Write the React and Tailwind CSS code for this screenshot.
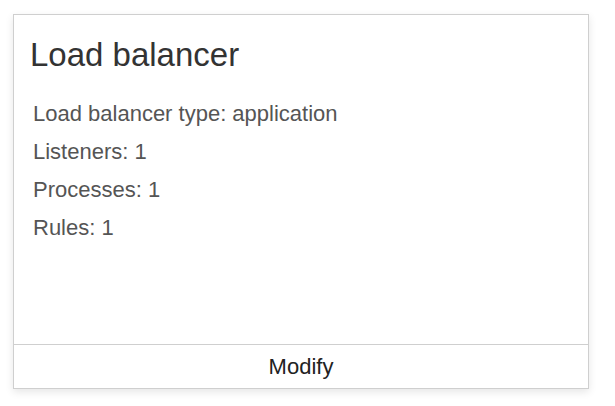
export default function App() {
  const rows = ['Load balancer type: application', 'Listeners: 1', 'Processes: 1', 'Rules: 1'];

  return (
    <div className="min-h-screen bg-white pl-[13px] pt-[14px] font-['Liberation_Sans',Arial,sans-serif]">
      <div className="flex h-[375px] w-[576px] flex-col border border-[#cfcfcf] bg-white shadow-[0_3px_8px_rgba(0,0,0,0.10)]">
        <div className="flex-1 pl-4 pt-[22px]">
          <h2 className="text-[33px] leading-[36px] text-[#333]">Load balancer</h2>
          <ul className="mt-[22px] pl-[3px]">
            {rows.map((row) => (
              <li key={row} className="text-[22px] leading-[38px] text-[#555]">
                {row}
              </li>
            ))}
          </ul>
        </div>
        <button
          type="button"
          className="flex h-[44px] items-center justify-center border-t border-[#cfcfcf] pb-px text-[22px] text-[#222]"
        >
          Modify
        </button>
      </div>
    </div>
  );
}
